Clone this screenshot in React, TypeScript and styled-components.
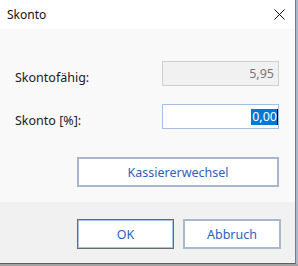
import styled, { createGlobalStyle } from 'styled-components'

const GlobalStyle = createGlobalStyle`
  html, body {
    margin: 0;
    padding: 0;
    background: #a9b7cf;
  }
  body {
    font-family: 'Noto Sans', 'Open Sans', sans-serif;
    font-size: 12px;
  }
`

export default function App() {
  return (
    <>
      <GlobalStyle />
      <Window>
        <TitleBar>
          <Title>Skonto</Title>
          <CloseIcon width='11' height='11' viewBox='0 0 11 11'>
            <path d='M0.5 0.5 L10.5 10.5 M10.5 0.5 L0.5 10.5' />
          </CloseIcon>
        </TitleBar>
        <Content>
          <FormGrid>
            <Label>Skontofähig:</Label>
            <Field readOnly>5,95</Field>
            <Label>Skonto [%]:</Label>
            <Field focused>
              <Selection>0,00</Selection>
              <Caret />
            </Field>
          </FormGrid>
          <WideButton>Kassiererwechsel</WideButton>
        </Content>
        <Footer>
          <DialogButton isDefault>OK</DialogButton>
          <DialogButton>Abbruch</DialogButton>
        </Footer>
      </Window>
      <BottomEdge />
    </>
  )
}

const Window = styled.div`
  width: 295px;
  height: 263px;
  display: flex;
  flex-direction: column;
  border-right: 1px solid #7c7c7c;
  border-bottom: 1px solid #5f5f5f;
  background: #f9f9f9;
`

const TitleBar = styled.div`
  height: 29px;
  flex: none;
  background: #ffffff;
  display: flex;
  align-items: center;
  justify-content: space-between;
  padding: 0 10px 0 7px;
`

const Title = styled.span`
  color: #111;
  font-size: 12px;
  margin-top: -1px;
`

const CloseIcon = styled.svg`
  stroke: #111;
  stroke-width: 1;
  fill: none;
  margin-top: -1px;
`

const Content = styled.div`
  flex: 1;
  background: #f9f9f9;
  padding: 32px 16px 0 15px;
  display: flex;
  flex-direction: column;
  align-items: flex-end;
`

const FormGrid = styled.div`
  width: 100%;
  display: grid;
  grid-template-columns: 1fr 117px;
  grid-auto-rows: 25px;
  row-gap: 18px;
  align-items: center;
`

const Label = styled.span`
  color: #222;
  font-size: 12.5px;
  margin-top: 7px;
`

const Field = styled.div<{ readOnly?: boolean; focused?: boolean }>`
  box-sizing: border-box;
  height: 25px;
  display: flex;
  align-items: center;
  justify-content: flex-end;
  overflow: hidden;
  position: relative;
  padding-right: ${(p) => (p.focused ? '1px' : '4px')};
  border: 1px solid ${(p) => (p.focused ? '#a5bfe2' : '#cfcfcf')};
  background: ${(p) => (p.readOnly ? '#f1f1f1' : '#ffffff')};
  color: ${(p) => (p.readOnly ? '#767676' : '#000')};
  font-size: 12.5px;
`

const Selection = styled.span`
  background: #0078d7;
  color: #ffffff;
  line-height: 16px;
  padding-left: 1px;
  white-space: nowrap;
`

const Caret = styled.span`
  position: absolute;
  right: 0;
  top: 4px;
  width: 1px;
  height: 16px;
  background: #000;
`

const ButtonBase = styled.button`
  box-sizing: border-box;
  height: 30px;
  font-family: inherit;
  font-size: 12.5px;
  color: #2c61c2;
  background: #ffffff;
  padding: 0;
`

const WideButton = styled(ButtonBase)`
  width: 202px;
  margin-top: 28px;
  border: 2px solid #a8b6cc;
`

const Footer = styled.div`
  height: 61px;
  flex: none;
  background: #f1f1f1;
  display: flex;
  justify-content: flex-end;
  align-items: flex-start;
  gap: 9px;
  padding: 17px 14px 0 0;
  box-sizing: border-box;
`

const DialogButton = styled(ButtonBase)<{ isDefault?: boolean }>`
  width: ${(p) => (p.isDefault ? '97px' : '98px')};
  border: ${(p) => (p.isDefault ? '1px solid #6b6b6b' : '2px solid #aab8cf')};
  box-shadow: ${(p) => (p.isDefault ? 'inset 0 0 0 1px #a9c2e4' : 'none')};
`

const BottomEdge = styled.div`
  width: 298px;
  height: 2px;
  background: #a3a3a3;
`
